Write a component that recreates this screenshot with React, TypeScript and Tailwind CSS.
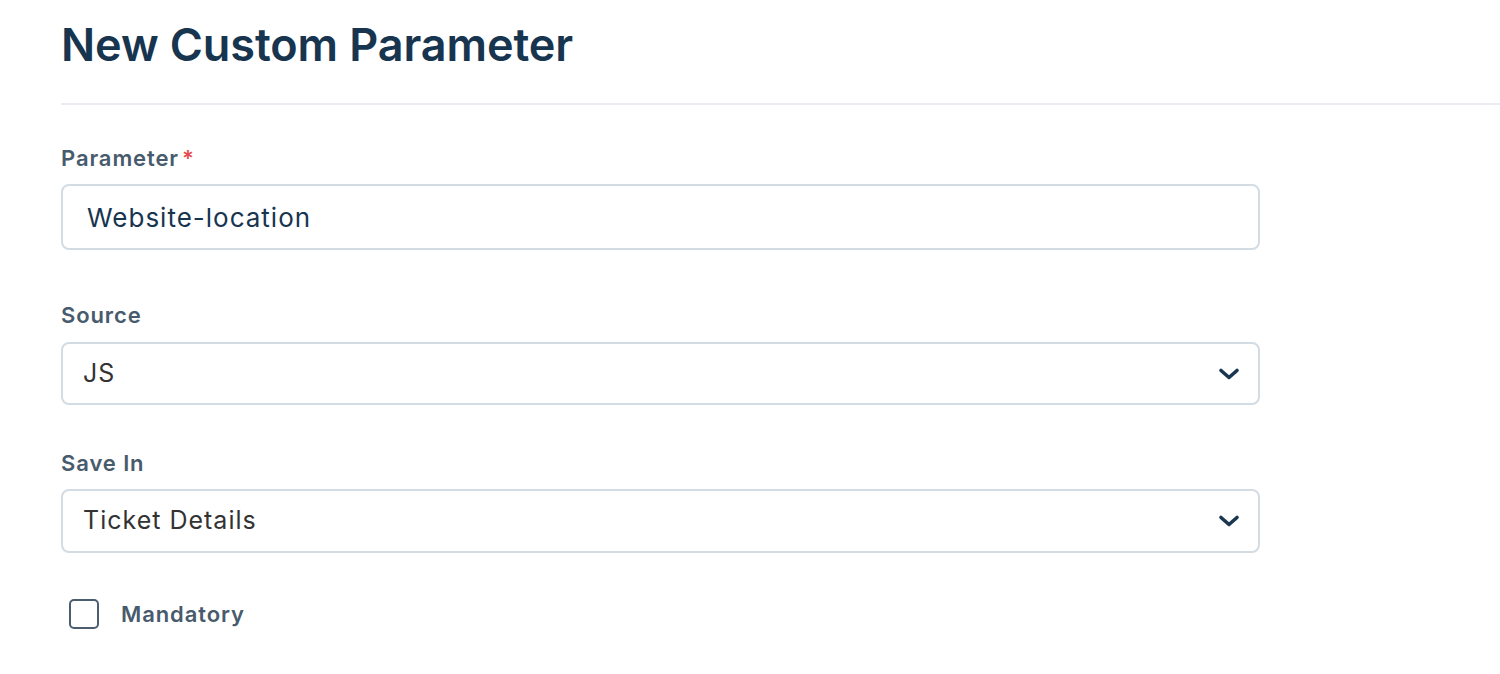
import React from "react";

function Chevron() {
  return (
    <svg width="22" height="14" viewBox="0 0 22 14" fill="none">
      <path d="M3 3.5 L11 10.5 L19 3.5" stroke="#1b3650" strokeWidth="3.6" strokeLinecap="round" strokeLinejoin="round" />
    </svg>
  );
}

const labelCls = "text-[22px] leading-[26px] font-semibold tracking-[0.9px] text-[#485b6d]";

export default function App() {
  return (
    <div className="w-[1500px] h-[674px] bg-white overflow-hidden" style={{ fontFamily: "Inter, 'Noto Sans', sans-serif" }}>
      <div className="pl-[61px] pt-[17px]">
        <h1 className="text-[45px] leading-[56px] font-semibold text-[#18354f] tracking-[-0.1px]">New Custom Parameter</h1>
        <div className="mt-[30px] h-[2px] bg-[#e9edf1]" />
        <div className="w-[1199px] pt-[40px]">
          <label className={"flex items-center " + labelCls}>
            Parameter<span className="ml-[3px] text-[#e5484d]">*</span>
          </label>
          <div className="mt-[13px] h-[66px] rounded-[8px] border-2 border-[#d3dbe3] flex items-center pl-[24px] text-[26px] tracking-[1px] text-[#18354f]">
            Website-location
          </div>

          <label className={"block mt-[52px] " + labelCls}>Source</label>
          <div className="mt-[14px] h-[63px] rounded-[8px] border-2 border-[#d3dbe3] flex items-center justify-between pl-[20px] pr-[18px] text-[25px] tracking-[1px] text-[#333333]">
            <span>JS</span>
            <Chevron />
          </div>

          <label className={"block mt-[45px] " + labelCls}>Save In</label>
          <div className="mt-[13px] h-[64px] rounded-[8px] border-2 border-[#d3dbe3] flex items-center justify-between pl-[20px] pr-[18px] text-[25px] tracking-[1px] text-[#333333]">
            <span>Ticket Details</span>
            <Chevron />
          </div>

          <div className="mt-[46px] ml-[8px] flex items-center">
            <div className="w-[30px] h-[30px] rounded-[5px] border-2 border-[#4b5d6f]" />
            <span className={"ml-[22px] " + labelCls}>Mandatory</span>
          </div>
        </div>
      </div>
    </div>
  );
}
